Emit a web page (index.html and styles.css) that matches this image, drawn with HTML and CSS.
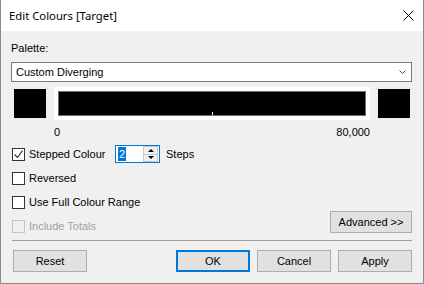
FILE: index.html
```html
<!DOCTYPE html>
<html lang="en">
  <head>
    <meta charset="UTF-8" />
    <title>Edit Colours [Target]</title>
    <link rel="stylesheet" href="styles.css">
  </head>

  <body>
    <div class="dialog">
      <div class="titlebar">
        <span class="title">Edit Colours [Target]</span>
        <svg class="close" width="11" height="11" viewBox="0 0 11 11">
          <path d="M0.5 0.5 L10.5 10.5 M10.5 0.5 L0.5 10.5" stroke="#000" stroke-width="1" fill="none" />
        </svg>
      </div>

      <div class="content">
        <p class="field-label">Palette:</p>

        <div class="select">
          <span>Custom Diverging</span>
          <svg width="7" height="4" viewBox="0 0 7 4">
            <path d="M0.5 0.5 L3.5 3.5 L6.5 0.5" stroke="#555" stroke-width="1" fill="none" />
          </svg>
        </div>

        <div class="ramp">
          <div class="swatch"></div>
          <div class="bar-frame">
            <div class="bar"><span class="tick"></span></div>
          </div>
          <div class="swatch"></div>
        </div>

        <div class="range-labels">
          <span>0</span>
          <span>80,000</span>
        </div>

        <div class="options">
          <div class="checks">
            <div class="check-row">
              <span class="checkbox checked">
                <svg width="11" height="11" viewBox="0 0 11 11">
                  <path d="M1.5 5.5 L4.5 8.5 L9.5 1.5" stroke="#222" stroke-width="1.1" fill="none" />
                </svg>
              </span>
              <span class="step-label">Stepped Colour</span>
              <div class="spin">
                <span class="spin-value"><span class="selected">2</span></span>
                <div class="spin-buttons">
                  <span class="spin-btn"><i class="up"></i></span>
                  <span class="spin-btn"><i class="down"></i></span>
                </div>
              </div>
              <span class="steps">Steps</span>
            </div>
            <div class="check-row">
              <span class="checkbox"></span>
              <span>Reversed</span>
            </div>
            <div class="check-row">
              <span class="checkbox"></span>
              <span>Use Full Colour Range</span>
            </div>
            <div class="check-row disabled">
              <span class="checkbox"></span>
              <span>Include Totals</span>
            </div>
          </div>
          <button class="btn advanced">Advanced &gt;&gt;</button>
        </div>

        <div class="separator"></div>

        <div class="buttons">
          <button class="btn reset">Reset</button>
          <button class="btn default">OK</button>
          <button class="btn">Cancel</button>
          <button class="btn">Apply</button>
        </div>
      </div>
    </div>
  </body>
</html>
```

FILE: styles.css
```css
body {
  margin: 0;
  font-family: "Liberation Sans", Arial, sans-serif;
  font-size: 11px;
  color: #000;
}

.dialog {
  width: 424px;
  height: 284px;
  box-sizing: border-box;
  border: 1px solid #8a8a8a;
  border-top: none;
  background-color: #f0f0f0;
}

.titlebar {
  height: 31px;
  background-color: #fff;
  display: flex;
  align-items: center;
  justify-content: space-between;
  padding: 0 9px 0 8px;
}

.title {
  font-family: "Noto Sans", sans-serif;
  font-size: 11.3px;
}

.close {
  display: block;
}

.content {
  padding: 9px 11px 0 10px;
}

.field-label {
  margin: 0;
  line-height: 16px;
}

.select {
  margin-top: 6px;
  height: 20px;
  box-sizing: border-box;
  border: 1px solid #7a7a7a;
  background-color: #fff;
  display: flex;
  align-items: center;
  justify-content: space-between;
  padding: 0 5px 0 4px;
}

.select svg {
  display: block;
}

.ramp {
  margin-top: 5px;
  display: flex;
  align-items: center;
}

.swatch {
  width: 32px;
  height: 29px;
  background-color: #000;
  margin-left: 3px;
}

.ramp .swatch + .bar-frame,
.bar-frame + .swatch {
  margin-left: 8px;
}

.bar-frame {
  width: 316px;
  height: 33px;
  box-sizing: border-box;
  padding: 4px;
  background-color: #fff;
}

.bar {
  position: relative;
  height: 25px;
  box-sizing: border-box;
  border: 1px solid #6d6d6d;
  background-color: #000;
}

.tick {
  position: absolute;
  left: 153px;
  bottom: 0;
  width: 1px;
  height: 3px;
  background-color: #fff;
}

.range-labels {
  margin: 4px 0 0 43px;
  width: 316px;
  display: flex;
  justify-content: space-between;
  line-height: 16px;
}

.options {
  margin-top: 2px;
  display: flex;
  justify-content: space-between;
  align-items: flex-end;
}

.check-row {
  height: 24px;
  display: flex;
  align-items: center;
  padding-left: 1px;
}

.checkbox {
  width: 13px;
  height: 13px;
  box-sizing: border-box;
  border: 1px solid #333;
  background-color: #fff;
  margin-right: 4px;
  display: flex;
  align-items: center;
  justify-content: center;
}

.checkbox svg {
  display: block;
}

.disabled {
  color: #a0a0a0;
}

.disabled .checkbox {
  border-color: #c4c4c4;
  background-color: #f0f0f0;
}

.step-label {
  width: 86px;
}

.spin {
  width: 45px;
  height: 18px;
  box-sizing: border-box;
  border: 1px solid #0078d7;
  background-color: #fff;
  display: flex;
  justify-content: space-between;
}

.spin-value {
  padding: 1px 0 0 2px;
  line-height: 14px;
}

.selected {
  display: inline-block;
  background-color: #0078d7;
  color: #fff;
  padding: 0 1px;
}

.spin-buttons {
  width: 15px;
  padding: 0 1px 0 0;
  display: flex;
  flex-direction: column;
}

.spin-btn {
  flex: 1;
  box-sizing: border-box;
  border: 1px solid #c8c8c8;
  background-color: #f0f0f0;
  display: flex;
  align-items: center;
  justify-content: center;
}

.spin-btn + .spin-btn {
  border-top: none;
}

.up,
.down {
  width: 0;
  height: 0;
  border-left: 3px solid transparent;
  border-right: 3px solid transparent;
}

.up {
  border-bottom: 3px solid #000;
}

.down {
  border-top: 3px solid #000;
}

.steps {
  margin-left: 6px;
}

.btn {
  font-family: "Liberation Sans", Arial, sans-serif;
  font-size: 11px;
  color: #000;
  height: 22px;
  width: 74px;
  padding: 0;
  background-color: #e1e1e1;
  border: 1px solid #adadad;
}

.advanced {
  width: 82px;
  margin-bottom: 5px;
}

.separator {
  margin: 2px 0 0 1px;
  height: 1px;
  background-color: #a0a0a0;
}

.buttons {
  margin-top: 9px;
  display: flex;
  gap: 7px;
}

.reset {
  margin: 0 auto 0 2px;
}

.default {
  border-color: #0078d7;
  box-shadow: inset 0 0 0 1px #0078d7;
}
```
